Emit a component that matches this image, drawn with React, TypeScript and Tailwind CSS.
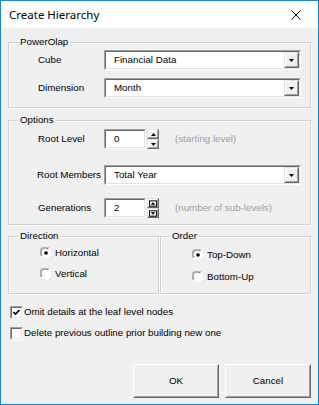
import React from 'react';

const sunkenOuter = 'border border-t-[#a0a0a0] border-l-[#a0a0a0] border-b-white border-r-white';
const sunkenInner = 'border border-t-[#696969] border-l-[#696969] border-b-[#e3e3e3] border-r-[#e3e3e3]';
const raisedOuter = 'border border-t-[#e3e3e3] border-l-[#e3e3e3] border-b-[#696969] border-r-[#696969]';
const raisedInner = 'border border-t-white border-l-white border-b-[#a0a0a0] border-r-[#a0a0a0]';

const Raised: React.FC<{ className?: string; children?: React.ReactNode }> = ({ className = '', children }) => (
    <div className={`${raisedOuter} bg-[#f0f0f0] ${className}`}>
        <div className={`${raisedInner} h-full w-full flex items-center justify-center`}>{children}</div>
    </div>
);

const Arrow: React.FC<{ down?: boolean }> = ({ down = true }) => (
    <svg width="5" height="3" viewBox="0 0 5 3">
        {down ? <polygon points="0,0 5,0 2.5,3" fill="#000" /> : <polygon points="0,3 5,3 2.5,0" fill="#000" />}
    </svg>
);

const BoxArrow: React.FC<{ down?: boolean }> = ({ down = false }) => (
    <svg width="9" height="7" viewBox="0 0 9 7">
        <rect x="0.5" y="0.5" width="8" height="6" fill="none" stroke="#000" />
        {down ? <polygon points="2,2 7,2 4.5,5" fill="#000" /> : <polygon points="2,5 7,5 4.5,2" fill="#000" />}
    </svg>
);

const Combo: React.FC<{ value: string }> = ({ value }) => (
    <div className={`${sunkenOuter} w-[197px] h-[20px]`}>
        <div className={`${sunkenInner} h-full bg-white flex items-center`}>
            <span className="flex-1 pl-[8px]">{value}</span>
            <Raised className="w-[15px] h-full">
                <Arrow />
            </Raised>
        </div>
    </div>
);

const Spin: React.FC<{ value: string; boxed?: boolean }> = ({ value, boxed }) => (
    <div className="flex">
        <div className={`${sunkenOuter} w-[42px] h-[20px]`}>
            <div className={`${sunkenInner} h-full bg-white flex items-center pl-[8px]`}>{value}</div>
        </div>
        <div className="flex flex-col ml-[1px] w-[12px] h-[20px]">
            <Raised className="h-[10px]">{boxed ? <BoxArrow /> : <Arrow down={false} />}</Raised>
            <Raised className="h-[10px]">{boxed ? <BoxArrow down /> : <Arrow />}</Raised>
        </div>
    </div>
);

const Group: React.FC<{ title: string; className?: string; children?: React.ReactNode }> = ({ title, className = '', children }) => (
    <div className={`relative border border-[#d0d0d0] shadow-[inset_1px_1px_0_#fff,1px_1px_0_#fff] ${className}`}>
        <span className="absolute -top-[7px] left-[9px] px-[2px] leading-[12px] bg-[#f0f0f0]">{title}</span>
        {children}
    </div>
);

const Radio: React.FC<{ checked?: boolean; label: string }> = ({ checked, label }) => (
    <div className="flex items-center h-[14px]">
        <svg width="12" height="12" viewBox="0 0 12 12">
            <circle cx="6" cy="6" r="5.5" fill="#fff" />
            <path d="M1.2 9 A5 5 0 0 1 9 1.2" fill="none" stroke="#a0a0a0" />
            <path d="M2.2 8.3 A4 4 0 0 1 8.3 2.2" fill="none" stroke="#696969" />
            <path d="M10.8 3 A5 5 0 0 1 3 10.8" fill="none" stroke="#e3e3e3" />
            {checked && <circle cx="6" cy="6" r="1.8" fill="#000" />}
        </svg>
        <span className="ml-[3px]">{label}</span>
    </div>
);

const Check: React.FC<{ checked?: boolean; label: string }> = ({ checked, label }) => (
    <div className="flex items-center h-[14px] pl-[2px]">
        <div className={`${sunkenOuter} w-[13px] h-[13px]`}>
            <div className={`${sunkenInner} h-full bg-white flex items-center justify-center`}>
                {checked && (
                    <svg width="7" height="7" viewBox="0 0 7 7">
                        <path d="M0.5 3 L2.5 5 L6.5 1" fill="none" stroke="#000" strokeWidth="1.6" />
                    </svg>
                )}
            </div>
        </div>
        <span className="ml-[1px]">{label}</span>
    </div>
);

const Button: React.FC<{ label: string }> = ({ label }) => (
    <div className="w-[86px] h-[34px] border border-t-white border-l-white border-b-[#696969] border-r-[#696969] bg-[#f0f0f0]">
        <div className="h-full border border-t-[#f0f0f0] border-l-[#f0f0f0] border-b-[#a0a0a0] border-r-[#a0a0a0] flex items-center justify-center">
            {label}
        </div>
    </div>
);

export default function App() {
    return (
        <div
            className="w-[319px] h-[405px] border border-[#1883d7] bg-[#f0f0f0] flex flex-col text-[9.75px] text-black"
            style={{ fontFamily: '"Liberation Sans", Arial, sans-serif' }}
        >
            <div className="h-[27px] bg-white flex items-center justify-between pl-[8px] pr-[17px]">
                <span className="text-[11.5px]" style={{ fontFamily: '"Noto Sans", sans-serif' }}>Create Hierarchy</span>
                <svg width="10" height="10" viewBox="0 0 10 10">
                    <path d="M0.5 0.5 L9.5 9.5 M9.5 0.5 L0.5 9.5" stroke="#000" strokeWidth="1" />
                </svg>
            </div>

            <div className="flex flex-col px-[7px]">
                <Group title="PowerOlap" className="mt-[14px] pt-[7px] pb-[9px]">
                    <div className="flex items-center h-[20px] pl-[29px]">
                        <span className="w-[66px]">Cube</span>
                        <Combo value="Financial Data" />
                    </div>
                    <div className="flex items-center h-[20px] pl-[29px] mt-[8px]">
                        <span className="w-[66px]">Dimension</span>
                        <Combo value="Month" />
                    </div>
                </Group>

                <Group title="Options" className="mt-[12px] pt-[8px] pb-[6px]">
                    <div className="flex items-center h-[20px] pl-[29px]">
                        <span className="w-[66px]">Root Level</span>
                        <Spin value="0" />
                        <span className="ml-[16px] text-[#a0a0a0]">(starting level)</span>
                    </div>
                    <div className="flex items-center h-[20px] pl-[28px] mt-[16px]">
                        <span className="w-[67px]">Root Members</span>
                        <Combo value="Total Year" />
                    </div>
                    <div className="flex items-center h-[20px] pl-[29px] mt-[13px]">
                        <span className="w-[66px]">Generations</span>
                        <Spin value="2" boxed />
                        <span className="ml-[16px] text-[#a0a0a0]">(number of sub-levels)</span>
                    </div>
                </Group>

                <div className="flex gap-[1px] mt-[11px]">
                    <Group title="Direction" className="w-[151px] h-[58px] pt-[9px] pl-[31px]">
                        <Radio checked label="Horizontal" />
                        <div className="mt-[7px]">
                            <Radio label="Vertical" />
                        </div>
                    </Group>
                    <Group title="Order" className="flex-1 h-[58px] pt-[11px] pl-[31px]">
                        <Radio checked label="Top-Down" />
                        <div className="mt-[8px]">
                            <Radio label="Bottom-Up" />
                        </div>
                    </Group>
                </div>

                <div className="mt-[11px]">
                    <Check checked label="Omit details at the leaf level nodes" />
                </div>
                <div className="mt-[7px]">
                    <Check label="Delete previous outline prior building new one" />
                </div>

                <div className="flex justify-end gap-[6px] mt-[24px]">
                    <Button label="OK" />
                    <Button label="Cancel" />
                </div>
            </div>
        </div>
    );
}
